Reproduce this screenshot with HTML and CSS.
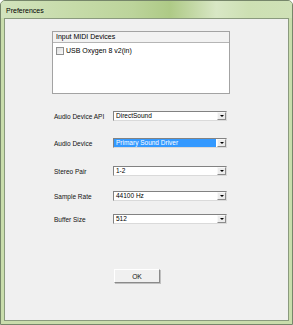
FILE: index.html
```html
<!DOCTYPE html>
<html>
<head>
<meta charset="utf-8">
<link rel="stylesheet" href="styles.css">
</head>
<body>
<div class="window">
  <div class="titlebar"><span class="title">Preferences</span></div>
  <div class="client">
    <div class="listbox">
      <div class="listbox-header">Input MIDI Devices</div>
      <div class="listbox-body">
        <div class="list-item"><span class="checkbox"></span><span>USB Oxygen 8 v2(in)</span></div>
      </div>
    </div>
    <div class="form">
      <div class="row">
        <span class="label">Audio Device API</span>
        <div class="combo"><span class="combo-value">DirectSound</span><span class="combo-btn"><span class="arrow"></span></span></div>
      </div>
      <div class="row">
        <span class="label">Audio Device</span>
        <div class="combo"><span class="combo-value selected">Primary Sound Driver</span><span class="combo-btn"><span class="arrow"></span></span></div>
      </div>
      <div class="row">
        <span class="label">Stereo Pair</span>
        <div class="combo"><span class="combo-value">1-2</span><span class="combo-btn"><span class="arrow"></span></span></div>
      </div>
      <div class="row">
        <span class="label">Sample Rate</span>
        <div class="combo"><span class="combo-value">44100 Hz</span><span class="combo-btn"><span class="arrow"></span></span></div>
      </div>
      <div class="row">
        <span class="label">Buffer Size</span>
        <div class="combo"><span class="combo-value">512</span><span class="combo-btn"><span class="arrow"></span></span></div>
      </div>
    </div>
    <button class="ok-btn">OK</button>
  </div>
</div>
</body>
</html>
```
FILE: styles.css
```css
* { box-sizing: border-box; }
html, body { margin: 0; padding: 0; }
body {
  width: 293px;
  height: 325px;
  background: #ffffff;
  font-family: "Liberation Sans", Arial, sans-serif;
  color: #000;
}
.window {
  width: 293px;
  height: 325px;
  border: 1px solid #76866a;
  border-radius: 5px 5px 0 0;
  background: #c9ddac;
  padding: 0 3px 3px 3px;
  display: flex;
  flex-direction: column;
}
.titlebar {
  height: 17px;
  margin: 0 -3px;
  padding-left: 5px;
  display: flex;
  align-items: center;
  border-radius: 4px 4px 0 0;
  background: linear-gradient(90deg, #d2e3bd 0%, #c6dba9 25%, #bcd49b 45%, #aeca86 58%, #c3d8a5 66%, #d8e7c5 74%, #cde0b3 85%, #cfe1b7 100%);
}
.title {
  font-size: 7px;
  line-height: 1;
  padding-top: 1px;
}
.client {
  flex: 1;
  background: #f0f0f0;
  border: 1px solid #8a9a7e;
  display: flex;
  flex-direction: column;
  align-items: flex-start;
}
.listbox {
  margin: 12px 0 0 47px;
  width: 178px;
  height: 63px;
  border: 1px solid #a3a3a3;
  display: flex;
  flex-direction: column;
}
.listbox-header {
  height: 11px;
  background: #f2f2f2;
  border-bottom: 1px solid #b5b5b5;
  font-size: 7px;
  line-height: 10px;
  padding-left: 3px;
}
.listbox-body {
  flex: 1;
  background: #ffffff;
  padding: 3px 0 0 3px;
}
.list-item {
  display: flex;
  align-items: center;
  gap: 2px;
  font-size: 7px;
  line-height: 9px;
}
.checkbox {
  width: 8px;
  height: 8px;
  border: 1px solid #8e8f8f;
  background: linear-gradient(135deg, #dcdcdc, #fafafa);
}
.form {
  display: flex;
  flex-direction: column;
  margin-left: 49px;
}
.row {
  display: flex;
  align-items: center;
  height: 10px;
}
.row:nth-child(1) { margin-top: 17px; }
.row:nth-child(2) { margin-top: 17px; }
.row:nth-child(3) { margin-top: 18px; }
.row:nth-child(4) { margin-top: 15px; }
.row:nth-child(5) { margin-top: 13px; }
.label {
  width: 59px;
  font-size: 6.5px;
  color: #111;
  padding-top: 1px;
}
.combo {
  width: 114px;
  height: 10px;
  display: flex;
  background: #ffffff;
  border: 1px solid;
  border-color: #828282 #dadada #dadada #828282;
}
.combo-value {
  flex: 1;
  font-size: 6.5px;
  line-height: 8px;
  padding-left: 2px;
  white-space: nowrap;
}
.combo-value.selected {
  background: #3399ff;
  color: #ffffff;
  margin: 0 1px 0 0;
}
.combo-btn {
  width: 9px;
  height: 8px;
  background: #ececec;
  border: 1px solid;
  border-color: #f8f8f8 #8c8c8c #8c8c8c #f8f8f8;
  display: flex;
  align-items: center;
  justify-content: center;
}
.arrow {
  width: 0;
  height: 0;
  border-left: 2px solid transparent;
  border-right: 2px solid transparent;
  border-top: 2px solid #000;
}
.ok-btn {
  margin: 45px 0 0 109px;
  width: 46px;
  height: 14px;
  padding: 0;
  background: #f0f0f0;
  border: 1px solid;
  border-color: #ffffff #8a8a8a #8a8a8a #ffffff;
  box-shadow: 1px 1px 0 #c0c0c0;
  font-family: "Liberation Sans", Arial, sans-serif;
  font-size: 6.7px;
  color: #111;
}
```
